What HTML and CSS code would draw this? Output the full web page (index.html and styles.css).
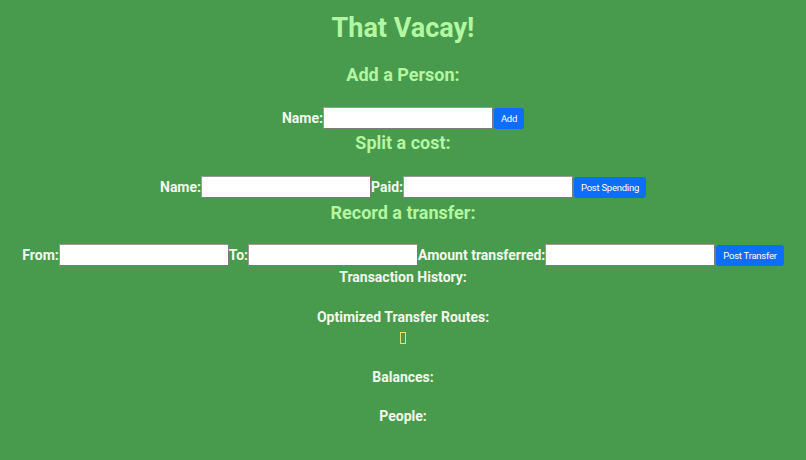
FILE: index.html
```html
<!DOCTYPE html>
<html>
<head>
<meta charset="utf-8">
<link rel="stylesheet" href="styles.css">
</head>
<body>
<div class="app">
  <h1 class="title">That Vacay!</h1>
  <h2 class="section first">Add a Person:</h2>
  <form class="row row-1">
    <label>Name:</label><input type="text"><button type="button" class="btn">Add</button>
  </form>
  <h2 class="section h-split">Split a cost:</h2>
  <form class="row row-2">
    <label>Name:</label><input type="text"><label>Paid:</label><input type="text"><button type="button" class="btn">Post Spending</button>
  </form>
  <h2 class="section h-transfer">Record a transfer:</h2>
  <form class="row row-3">
    <label>From:</label><input type="text"><label>To:</label><input type="text"><label>Amount transferred:</label><input type="text"><button type="button" class="btn">Post Transfer</button>
  </form>
  <h3 class="sub sub-history">Transaction History:</h3>
  <h3 class="sub sub-routes">Optimized Transfer Routes:</h3>
  <div class="json"><span class="empty"></span></div>
  <h3 class="sub sub-balances">Balances:</h3>
  <h3 class="sub sub-people">People:</h3>
</div>
</body>
</html>
```

FILE: styles.css
```css
html, body {
  margin: 0;
  padding: 0;
  background: #489b4c;
  height: 100%;
}
.app {
  display: flex;
  flex-direction: column;
  align-items: center;
  font-family: Roboto, "Liberation Sans", sans-serif;
  color: #f2f8ee;
}
.title {
  margin: 10px 0 0;
  font-size: 27px;
  line-height: 36px;
  font-weight: 700;
  color: #b3f7a3;
}
.section {
  margin: 0;
  font-size: 18px;
  line-height: 22px;
  font-weight: 700;
  color: #b3f7a3;
}
.section.first { margin-top: 18px; }
.section.h-split { margin-top: 3px; }
.section.h-transfer { margin-top: 4px; }
.row {
  display: flex;
  align-items: center;
  margin: 0;
  height: 22px;
}
.row-1 { margin-top: 21px; }
.row-2 { margin-top: 22px; }
.row-3 { margin-top: 20px; }
.row label {
  font-size: 14px;
  font-weight: 700;
  line-height: 22px;
  color: #f2f8ee;
}
.row input {
  box-sizing: border-box;
  width: 170px;
  height: 22px;
  margin: 0;
  padding: 1px 2px;
  border: 1px solid #7c7c7c;
  border-top-color: #9a9a9a;
  border-left-color: #9a9a9a;
  background: #fff;
}
.btn {
  box-sizing: border-box;
  height: 21px;
  margin: 0 0 0 1px;
  padding: 0 7px;
  border: none;
  border-radius: 3px;
  background: #0d6efd;
  color: #fff;
  font-family: Roboto, "Liberation Sans", sans-serif;
  font-size: 9.5px;
  letter-spacing: -0.25px;
  line-height: 21px;
}
.sub {
  margin: 0;
  font-size: 14px;
  line-height: 18px;
  font-weight: 700;
  color: #f2f8ee;
}
.sub-history { margin-top: 2px; }
.sub-routes { margin-top: 22px; }
.sub-balances { margin-top: 23px; }
.sub-people { margin-top: 21px; }
.json {
  margin-top: 5px;
  height: 14px;
  display: flex;
  align-items: center;
  justify-content: center;
}
.empty {
  display: block;
  width: 4px;
  height: 10px;
  border: 1px solid #e6e36a;
}
```
